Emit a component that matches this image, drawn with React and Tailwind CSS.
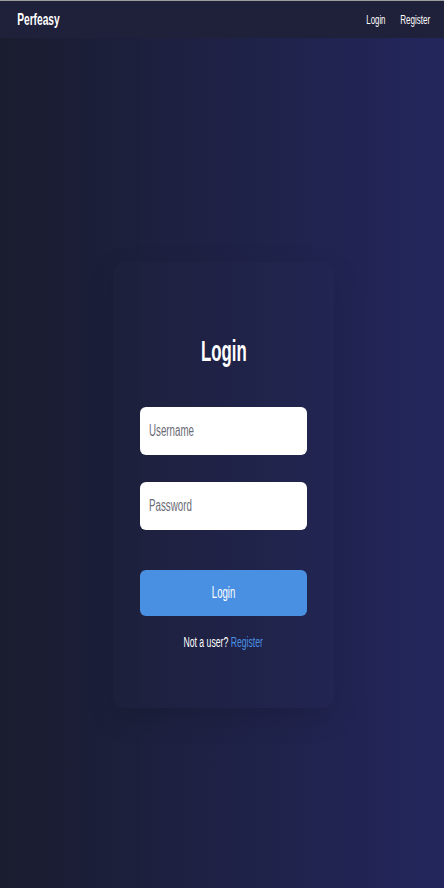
// App.jsx
const Sq = ({ w, s, children, className = "" }) => (
  <span className={`inline-flex justify-center ${w} ${className}`}>
    <span className={`inline-block whitespace-nowrap ${s}`}>{children}</span>
  </span>
);

const Field = ({ label, type }) => (
  <div className="relative h-[48px] w-full">
    <input
      type={type}
      className="h-full w-full rounded-md bg-white outline-none"
    />
    <span className="pointer-events-none absolute left-[9px] top-0 flex h-full items-center text-[16px] text-[#6b6b76]">
      <span className="inline-block origin-left scale-x-[0.61] whitespace-nowrap">{label}</span>
    </span>
  </div>
);

export default function App() {
  return (
    <div
      className="flex min-h-[888px] w-full flex-col bg-gradient-to-r from-[#1a1c2f] to-[#23265c] text-white"
      style={{ fontFamily: '"Liberation Sans", Arial, sans-serif' }}
    >
      {/* Navbar */}
      <nav className="flex h-[38px] items-center justify-between border-t border-[#9c9c9c] bg-[#1f2039] pl-[18px] pr-[14px]">
        <Sq w="w-[41px]" s="scale-x-[0.6]" className="text-[17px] font-bold">Perfeasy</Sq>
        <div className="flex items-center gap-[15px] text-[13px]">
          <Sq w="w-[19px]" s="scale-x-[0.6]">Login</Sq>
          <Sq w="w-[30px]" s="scale-x-[0.62]">Register</Sq>
        </div>
      </nav>

      {/* Card */}
      <div className="ml-[113px] mt-[224px] flex h-[446px] w-[221px] flex-col items-center rounded-xl bg-white/[0.006] px-[27px] pt-[71px] shadow-[0_10px_30px_rgba(0,0,0,0.12)]">
        <h1 className="flex h-[36px] items-center text-[30px] font-bold leading-none">
          <Sq w="w-[46px]" s="scale-x-[0.56]">Login</Sq>
        </h1>

        <div className="mt-[38px] w-full">
          <Field label="Username" type="text" />
        </div>
        <div className="mt-[27px] w-full">
          <Field label="Password" type="password" />
        </div>

        <button className="mt-[40px] flex h-[46px] w-full items-center justify-center rounded-md bg-[#4a90e2] text-[16px] text-white">
          <Sq w="w-[24px]" s="scale-x-[0.6]">Login</Sq>
        </button>

        <p className="mt-[16px] flex h-[20px] items-center text-[14px]">
          <Sq w="w-[80px]" s="scale-x-[0.62]">
            Not a user? <span className="text-[#4a90e2]">Register</span>
          </Sq>
        </p>
      </div>
    </div>
  );
}
